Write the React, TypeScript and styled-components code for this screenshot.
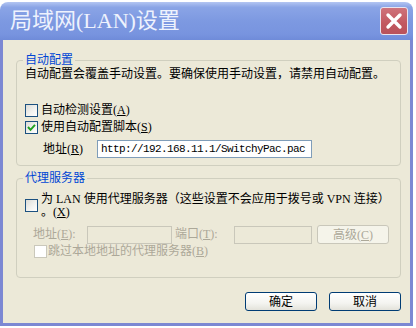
import React from 'react';
import styled, { createGlobalStyle } from 'styled-components';

const GlobalStyle = createGlobalStyle`
    html, body {
        margin: 0;
        padding: 0;
        background: #ffffff;
    }
    body {
        font-family: "Liberation Serif", "Noto Sans CJK SC", serif;
        font-size: 12px;
        color: #000000;
    }
`

const Page = styled.div`
    padding-top: 2px;
    width: 416px;
    height: 326px;
`

const Window = styled.div`
    width: 413px;
    height: 324px;
    display: flex;
    flex-direction: column;
`

const TitleBar = styled.div`
    height: 38px;
    flex-shrink: 0;
    display: flex;
    align-items: center;
    justify-content: space-between;
    padding: 0 5px 0 10px;
    box-sizing: border-box;
    border-radius: 8px 8px 0 0;
    background: linear-gradient(180deg, #b3c5f2 0%, #8aa4e6 14%, #7d99e1 50%, #7894df 85%, #6f8bd9 100%);
`

const Title = styled.h1`
    margin: 0;
    font-family: "Liberation Serif", "Noto Sans CJK SC", serif;
    font-size: 22px;
    font-weight: 400;
    color: #eef2fd;
    letter-spacing: 0;
    line-height: 24px;
`

const CloseButton = styled.button`
    width: 28px;
    height: 28px;
    padding: 0;
    border: 1px solid #e9e4ee;
    border-radius: 3px;
    background: linear-gradient(180deg, #cf737b 0%, #c25860 60%, #b9525b 100%);
    display: flex;
    align-items: center;
    justify-content: center;
`

const Frame = styled.div`
    flex: 1;
    border: 3px solid #7c88d3;
    border-top: none;
    background: #ece9d8;
    padding: 13px 9px 0 13px;
    display: flex;
    flex-direction: column;
`

const Group = styled.fieldset<{ $top?: number; $bottom: number }>`
    margin: ${p => p.$top ?? 0}px 0 0 0;
    padding: 0 8px ${p => p.$bottom}px 8px;
    border: 1px solid #d0cfbf;
    border-radius: 4px;
    min-width: 0;
`

const Legend = styled.legend`
    padding: 0 2px;
    margin-left: -2px;
    line-height: 14px;
    color: #0046d5;
`

const Desc = styled.div`
    line-height: 14px;
    height: 14px;
    white-space: nowrap;
`

const Row = styled.div<{ $top: number; $left?: number; $align?: string }>`
    display: flex;
    align-items: ${p => p.$align ?? 'center'};
    margin-top: ${p => p.$top}px;
    margin-left: ${p => p.$left ?? 0}px;
    white-space: nowrap;
`

const Box = styled.span<{ $disabled?: boolean; $offset?: number }>`
    width: 13px;
    height: 13px;
    box-sizing: border-box;
    flex-shrink: 0;
    margin-top: ${p => p.$offset ?? 0}px;
    border: 1px solid ${p => (p.$disabled ? '#cac8bb' : '#1c5180')};
    background: ${p => (p.$disabled ? '#ffffff' : 'linear-gradient(135deg, #dcdcd7 0%, #f4f4f1 60%, #ffffff 100%)')};
    display: flex;
    align-items: center;
    justify-content: center;
`

const Label = styled.span<{ $disabled?: boolean; $gap?: number; $width?: number }>`
    margin-left: ${p => p.$gap ?? 3}px;
    line-height: 13px;
    color: ${p => (p.$disabled ? '#aca899' : '#000000')};
    ${p => (p.$width ? `width: ${p.$width}px; flex-shrink: 0;` : '')}
`

const TextBox = styled.div<{ $width: number; $disabled?: boolean }>`
    width: ${p => p.$width}px;
    height: 18px;
    box-sizing: border-box;
    border: 1px solid ${p => (p.$disabled ? '#c9c7ba' : '#7f9db9')};
    background: ${p => (p.$disabled ? '#ece9d8' : '#ffffff')};
    padding: 0 3px;
    display: flex;
    align-items: center;
    font-family: "Liberation Mono", monospace;
    font-size: 11px;
    letter-spacing: -0.6px;
    flex-shrink: 0;
`

const Button = styled.button<{ $disabled?: boolean; $gap?: number }>`
    width: 72px;
    height: 19px;
    margin-left: ${p => p.$gap ?? 0}px;
    padding: 0;
    box-sizing: border-box;
    border: 1px solid ${p => (p.$disabled ? '#c9c7ba' : '#003c74')};
    border-radius: 3px;
    background: ${p => (p.$disabled ? '#f5f4ea' : 'linear-gradient(180deg, #ffffff 0%, #f4f4f0 60%, #e3e2da 100%)')};
    color: ${p => (p.$disabled ? '#aca899' : '#000000')};
    font-family: "Liberation Serif", "Noto Sans CJK SC", serif;
    font-size: 12px;
    line-height: 14px;
    flex-shrink: 0;
`

const Footer = styled.div`
    display: flex;
    justify-content: flex-end;
    gap: 12px;
    margin-top: 14px;
`

const Check = () => (
    <svg width="9" height="9" viewBox="0 0 9 9">
        <polyline points="1,4 3.5,6.8 8,1.8" fill="none" stroke="#21a121" strokeWidth="2" />
    </svg>
)

const App = () => {
    return (
        <Page>
            <GlobalStyle />
            <Window>
                <TitleBar>
                    <Title>局域网(LAN)设置</Title>
                    <CloseButton aria-label="关闭">
                        <svg width="20" height="20" viewBox="0 0 20 20">
                            <path d="M4 4 L16 16 M16 4 L4 16" stroke="#ffffff" strokeWidth="3.4" strokeLinecap="round" />
                        </svg>
                    </CloseButton>
                </TitleBar>
                <Frame>
                    <Group $bottom={7}>
                        <Legend>自动配置</Legend>
                        <Desc>自动配置会覆盖手动设置。要确保使用手动设置，请禁用自动配置。</Desc>
                        <Row $top={23}>
                            <Box />
                            <Label>自动检测设置(<u>A</u>)</Label>
                        </Row>
                        <Row $top={4}>
                            <Box><Check /></Box>
                            <Label>使用自动配置脚本(<u>S</u>)</Label>
                        </Row>
                        <Row $top={6} $left={18}>
                            <Label $gap={0} $width={54}>地址(<u>R</u>)</Label>
                            <TextBox $width={215}>http://192.168.11.1/SwitchyPac.pac</TextBox>
                        </Row>
                    </Group>
                    <Group $top={5} $bottom={19}>
                        <Legend>代理服务器</Legend>
                        <Row $top={8} $align="flex-start">
                            <Box $offset={6} />
                            <Label>
                                为 LAN 使用代理服务器（这些设置不会应用于拨号或 VPN 连接）
                                <br />。(<u>X</u>)
                            </Label>
                        </Row>
                        <Row $top={6} $left={8}>
                            <Label $disabled $gap={0} $width={54}>地址(<u>E</u>):</Label>
                            <TextBox $width={85} $disabled />
                            <Label $disabled $gap={3} $width={59}>端口(<u>T</u>):</Label>
                            <TextBox $width={78} $disabled />
                            <Button $disabled $gap={5}>高级(<u>C</u>)</Button>
                        </Row>
                        <Row $top={1} $left={9}>
                            <Box $disabled />
                            <Label $disabled $gap={1}>跳过本地地址的代理服务器(<u>B</u>)</Label>
                        </Row>
                    </Group>
                    <Footer>
                        <Button>确定</Button>
                        <Button>取消</Button>
                    </Footer>
                </Frame>
            </Window>
        </Page>
    );
}

export default App;
